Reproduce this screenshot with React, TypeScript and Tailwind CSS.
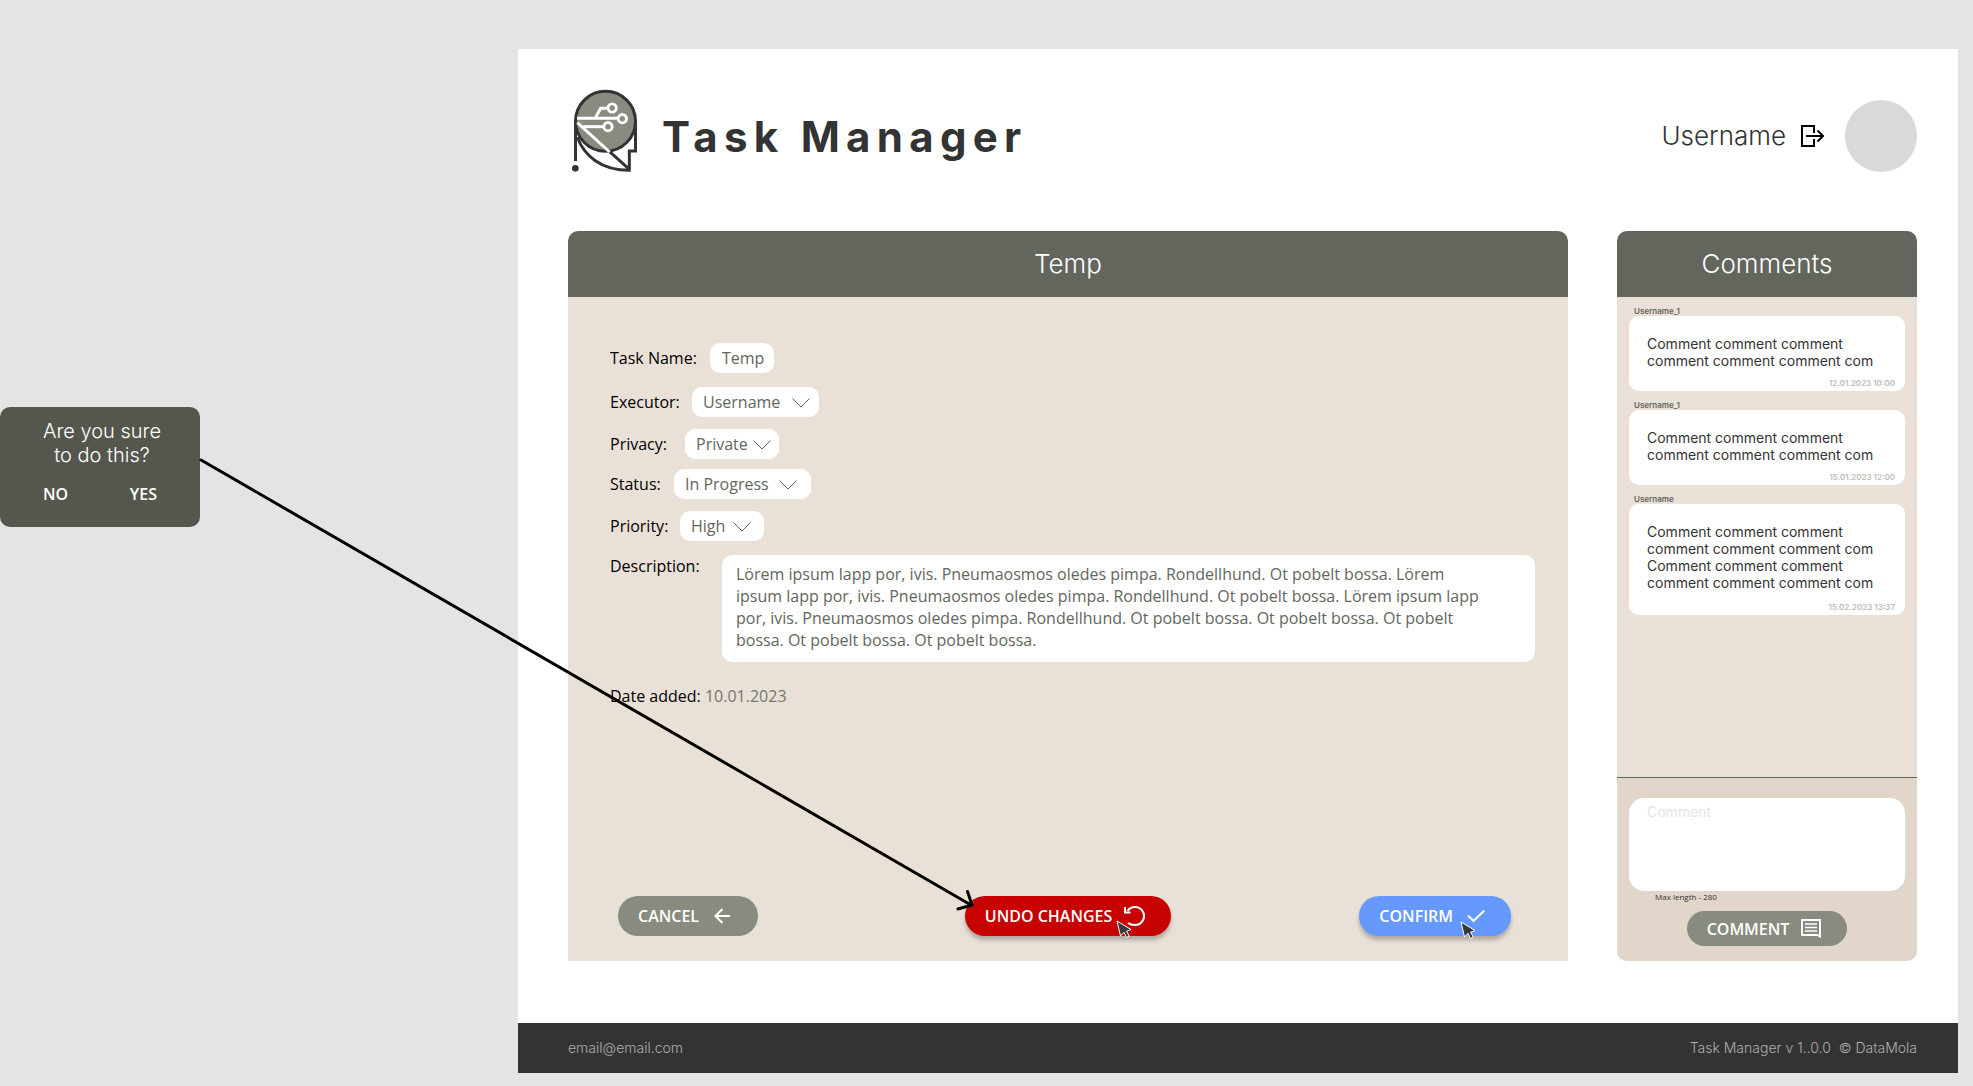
import React from "react";

const inter = "font-['Inter',sans-serif]";
const openSans = "font-['Open_Sans',sans-serif]";

function Logo() {
  return (
    <svg className="h-[83px] w-[66px] shrink-0" viewBox="36 27 198 249" fill="none" aria-hidden="true">
      <circle cx="136.5" cy="124" r="90" fill="#888c80" stroke="#333" strokeWidth="9" />
      <g stroke="#333" strokeWidth="9">
        <path d="M46.500 124V243" />
        <path d="M226.500 124V213H208V271" />
        <path d="M52 172C72 226 122 272 212 271" />
        <path d="M148 214L209 269" />
      </g>
      <circle cx="46" cy="265" r="10" fill="#333" />
      <g stroke="#fff" strokeWidth="9">
        <path d="M52 128L149 216" />
        <path d="M51 115H176" />
        <path d="M106 114L122 85H146" />
        <path d="M70 140H134" />
      </g>
      <g stroke="#fff" strokeWidth="8.500">
        <circle cx="156.500" cy="84" r="12.500" />
        <circle cx="187" cy="116" r="12.500" />
        <circle cx="144" cy="140" r="12.500" />
      </g>
    </svg>
  );
}

function LogoutIcon() {
  return (
    <svg className="h-6 w-6" viewBox="0 0 24 24" fill="none" stroke="#000" strokeWidth="2" aria-hidden="true">
      <path d="M14 9V2H2V22H14V15" />
      <path d="M6 12H23M17.500 6.500L23 12L17.500 17.500" />
    </svg>
  );
}

function Cursor() {
  return (
    <svg className="pointer-events-none absolute h-[19px] w-4" viewBox="0 0 16 19" aria-hidden="true">
      <path d="M1 1L4.500 16L8 12.300L10.500 17.500L13.200 16L10.600 11.200L15 9.500Z" fill="#333a3d" stroke="#fff" strokeWidth="1" />
    </svg>
  );
}

type SelectRowProps = {
  id: string;
  label: string;
  value: string;
  row: string;
  labelWidth: string;
  width: string;
  chevron: string;
};

function SelectRow({ id, label, value, row, labelWidth, width, chevron }: SelectRowProps) {
  return (
    <div className={`flex items-center ${row}`}>
      <label htmlFor={id} className={`shrink-0 ${labelWidth}`}>{label}</label>
      <div className={`relative ${width}`}>
        <select id={id} className="block h-[30px] w-full appearance-none rounded-[10px] bg-white pl-[11px] text-[#63665c]">
          <option>{value}</option>
        </select>
        <svg className={`pointer-events-none absolute top-[11px] h-2.5 w-[18px] ${chevron}`} viewBox="0 0 18 10" fill="none" stroke="#63665c" aria-hidden="true">
          <path d="M0.500 0.500L9 9L17.500 0.500" />
        </svg>
      </div>
    </div>
  );
}

type CommentProps = { user: string; lines: string[]; date: string; height: string };

function Comment({ user, lines, date, height }: CommentProps) {
  return (
    <li>
      <p className="pl-[5px] text-[8px] leading-[10px] font-semibold text-[#63665c]">{user}</p>
      <div className={`flex flex-col rounded-[10px] bg-white pt-[19px] pr-2.5 pb-[3px] pl-[18px] ${height}`}>
        {lines.map((line, i) => (
          <p key={i} className="text-sm leading-[17px] whitespace-nowrap text-[#333]">{line}</p>
        ))}
        <p className="mt-auto text-right text-[8px] leading-[10px] font-semibold text-[#bcbdb8]">{date}</p>
      </div>
    </li>
  );
}

const first = "Comment comment comment";
const second = "comment comment comment com";

export default function App() {
  return (
    <div className={`relative flex min-h-screen items-stretch bg-[#e4e4e4] pt-[49px] pr-[15px] pb-[13px] ${inter}`}>
      <aside className="w-[518px] shrink-0 pt-[358px]">
        <div role="dialog" aria-labelledby="ask" className="h-[120px] w-[200px] rounded-[10px] bg-[#55574e] pt-3 text-white">
          <p id="ask" className="pl-1 text-center text-xl leading-6 font-[350]">
            Are you sure
            <br />
            to do this?
          </p>
          <div className={`mt-[15px] flex justify-between px-[43px] font-semibold ${openSans}`}>
            <button type="button">NO</button>
            <button type="button">YES</button>
          </div>
        </div>
      </aside>

      <div className="flex min-w-0 flex-1 flex-col bg-white">
        <header className="flex items-center justify-between pt-10 pr-[41px] pl-[54px]">
          <div className="flex items-center gap-6">
            <Logo />
            <h1 className="pt-3 text-[42px] leading-[52px] font-bold tracking-[0.15em] text-[#333]">Task Manager</h1>
          </div>
          <div className="flex items-center pt-[11px]">
            <span className="text-[26px] leading-8 font-[350] text-[#333]">Username</span>
            <button type="button" aria-label="Log out" className="mr-[21px] ml-3.5"><LogoutIcon /></button>
            <div className="size-[72px] rounded-full bg-[#d9d9d9]" />
          </div>
        </header>

        <main className="mt-[59px] mb-[62px] flex flex-1 gap-[49px] pr-[41px] pl-[50px]">
          <section className="flex min-w-0 flex-1 flex-col bg-[#e9e1d8]">
            <div className="bg-white">
              <h2 className="rounded-t-[10px] bg-[#63665c] py-[17px] text-center text-[26px] leading-8 font-[350] text-white">Temp</h2>
            </div>
            <form className={`flex flex-1 flex-col pt-[46px] text-base leading-[22px] text-black ${openSans}`} onSubmit={(e) => e.preventDefault()}>
              <div className="pr-[33px] pl-[42px]">
                <div className="flex items-center">
                  <label htmlFor="name" className="w-[100px] shrink-0">Task Name:</label>
                  <input id="name" defaultValue="Temp" className="h-[30px] w-16 rounded-[10px] bg-white pl-3 text-[#63665c]" />
                </div>
                <SelectRow id="executor" label="Executor:" value="Username" row="mt-3.5" labelWidth="w-[82px]" width="w-[127px]" chevron="right-[9px]" />
                <SelectRow id="privacy" label="Privacy:" value="Private" row="mt-3" labelWidth="w-[75px]" width="w-[94px]" chevron="right-2" />
                <SelectRow id="status" label="Status:" value="In Progress" row="mt-2.5" labelWidth="w-16" width="w-[137px]" chevron="right-3.5" />
                <SelectRow id="priority" label="Priority:" value="High" row="mt-3" labelWidth="w-[70px]" width="w-[84px]" chevron="right-[13px]" />
                <div className="mt-3.5 flex items-start">
                  <label htmlFor="description" className="w-28 shrink-0">Description:</label>
                  <textarea
                    id="description"
                    rows={4}
                    className="block h-[107px] min-w-0 flex-1 resize-none rounded-[10px] bg-white pt-2 pr-10 pl-3.5 text-[#63665c]"
                    defaultValue={
                      "Lörem ipsum lapp por, ivis. Pneumaosmos oledes pimpa. Rondellhund. Ot pobelt bossa. Lörem\nipsum lapp por, ivis. Pneumaosmos oledes pimpa. Rondellhund. Ot pobelt bossa. Lörem ipsum lapp\npor, ivis. Pneumaosmos oledes pimpa. Rondellhund. Ot pobelt bossa. Ot pobelt bossa. Ot pobelt\nbossa. Ot pobelt bossa. Ot pobelt bossa."
                    }
                  />
                </div>
                <p className="mt-[23px]">
                  Date added: <span className="text-[#75786c]">10.01.2023</span>
                </p>
              </div>
              <div className="mt-auto grid grid-cols-[1fr_auto_1fr] pb-[25px] font-semibold text-white">
                <button type="button" className="ml-[50px] flex h-10 items-center gap-[15px] justify-self-start rounded-[20px] bg-[#888c80] pr-7 pl-5">
                  CANCEL
                  <svg className="h-4 w-4" viewBox="0 0 16 16" fill="none" stroke="#fff" strokeWidth="2" aria-hidden="true">
                    <path d="M16 8H1.500M8.500 1L1.500 8L8.500 15" />
                  </svg>
                </button>
                <button type="button" className="relative flex h-10 items-center gap-3 rounded-[20px] bg-[#c70000] pr-[26px] pl-5 shadow-[0_4px_4px_rgba(0,0,0,0.25)]">
                  UNDO CHANGES
                  <svg className="h-5 w-[21px]" viewBox="0 0 21 20" fill="none" stroke="#fff" strokeWidth="2" aria-hidden="true">
                    <path d="M4 17C6 18.500 8.500 19 11 19A9 9 0 1 0 3.500 5" />
                    <path d="M1 1V6.500H6.500" />
                  </svg>
                  <span className="absolute top-6 right-[39px] h-[19px] w-4"><Cursor /></span>
                </button>
                <button type="submit" className="relative mr-[57px] flex h-10 items-center gap-3.5 justify-self-end rounded-[20px] bg-[#6699ff] pr-[26px] pl-5 shadow-[0_4px_4px_rgba(0,0,0,0.25)]">
                  CONFIRM
                  <svg className="h-3 w-[18px]" viewBox="0 0 18 12" fill="none" stroke="#fff" strokeWidth="2" aria-hidden="true">
                    <path d="M1 5.500L6.500 11L17.300 0.500" />
                  </svg>
                  <span className="absolute top-[25px] right-[35px] h-[19px] w-4"><Cursor /></span>
                </button>
              </div>
            </form>
          </section>

          <section className="flex w-[300px] shrink-0 flex-col overflow-hidden rounded-[10px] bg-[#e9e1d8]">
            <h2 className="bg-[#63665c] py-[17px] text-center text-[26px] leading-8 font-[350] text-white">Comments</h2>
            <ul className="flex flex-1 flex-col gap-[9px] px-3 pt-[9px]">
              <Comment user="Username_1" lines={[first, second]} date="12.01.2023 10:00" height="min-h-[75px]" />
              <Comment user="Username_1" lines={[first, second]} date="15.01.2023 12:00" height="min-h-[75px]" />
              <Comment user="Username" lines={[first, second, first, second]} date="15.02.2023 13:37" height="min-h-[111px]" />
            </ul>
            <form className="flex flex-col border-t border-[#63665c] bg-[#e2d6ca] px-3 pt-5 pb-[15px]" onSubmit={(e) => e.preventDefault()}>
              <textarea
                aria-label="Comment"
                maxLength={280}
                placeholder="Comment"
                className="block h-[93px] resize-none rounded-[15px] bg-white px-[18px] pt-[5px] text-sm leading-[17px] text-[#333] placeholder:text-[#e4e4e4]"
              />
              <p className={`pl-[26px] text-[8px] leading-3 font-medium text-[#333] ${openSans}`}>Max length - 280</p>
              <button type="submit" className={`mt-2 flex h-[35px] items-center gap-3 self-center rounded-[18px] bg-[#888c80] pr-[26px] pl-5 font-semibold text-white ${openSans}`}>
                COMMENT
                <svg className="h-5 w-5" viewBox="0 0 20 20" fill="none" stroke="#fff" aria-hidden="true">
                  <path d="M1 1H19V17.500L16.500 16H1Z" strokeWidth="2" />
                  <path d="M4 5H16M4 8.500H16M4 12H16" strokeWidth="1.500" />
                </svg>
              </button>
            </form>
          </section>
        </main>

        <footer className="flex h-[50px] items-center justify-between bg-[#333] pr-[41px] pl-[50px] text-sm font-[350] text-[#b0b0b0]">
          <a href="mailto:email@email.com">email@email.com</a>
          <span className="whitespace-pre">Task Manager v 1..0.0  © DataMola</span>
        </footer>
      </div>

      <svg className="pointer-events-none absolute top-[455px] left-[195px] h-[460px] w-[785px]" viewBox="195 455 785 460" fill="none" stroke="#000" strokeWidth="3" strokeLinecap="round" aria-hidden="true">
        <path d="M201 460L971 905M967.500 891.500L972 905L958 909" />
      </svg>
    </div>
  );
}
